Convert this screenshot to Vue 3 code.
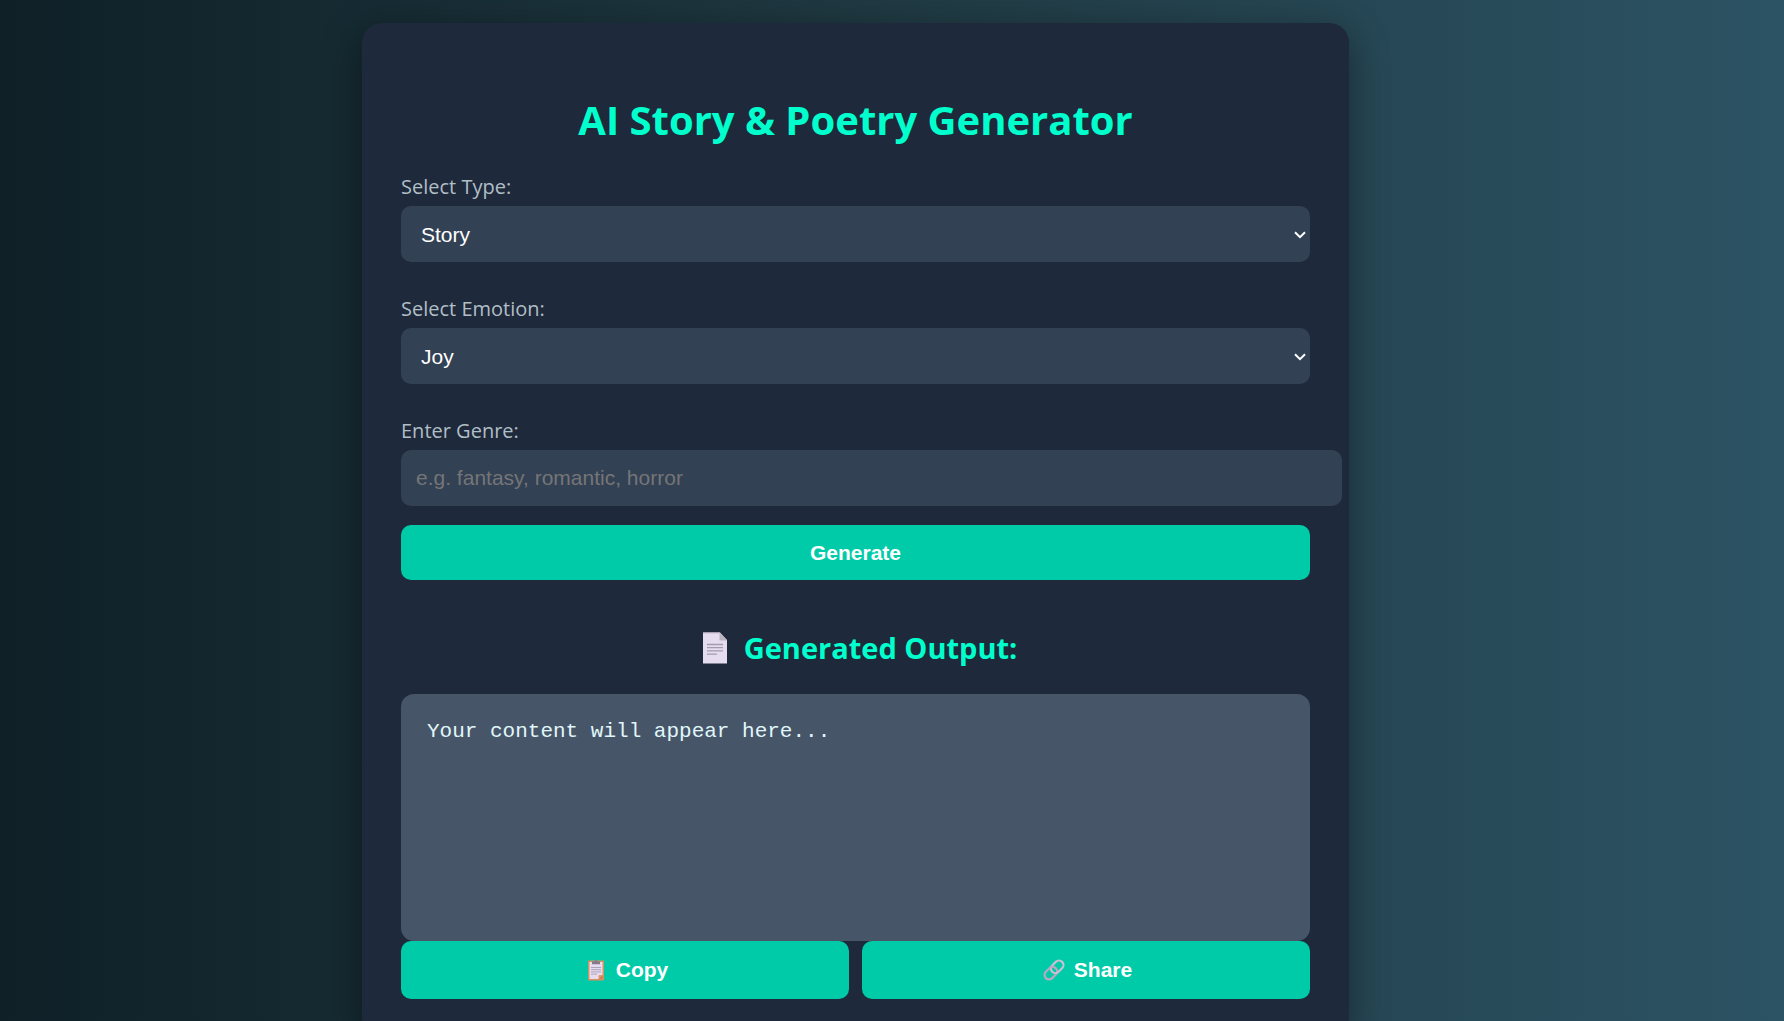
<script setup>
import { ref } from 'vue'

const type = ref('Story')
const emotion = ref('Joy')
const genre = ref('')
const output = ref('Your content will appear here...')

const types = ['Story', 'Poetry']
const emotions = ['Joy', 'Sadness', 'Anger', 'Fear', 'Love']
</script>

<template>
  <div class="page">
    <main class="card">
      <h1>AI Story &amp; Poetry Generator</h1>

      <div class="field">
        <label for="type">Select Type:</label>
        <div class="select-wrap">
          <select id="type" v-model="type">
            <option v-for="t in types" :key="t">{{ t }}</option>
          </select>
          <svg class="chevron" viewBox="0 0 12 8" aria-hidden="true"><path d="M1 1.2 6 6.2 11 1.2" /></svg>
        </div>
      </div>

      <div class="field">
        <label for="emotion">Select Emotion:</label>
        <div class="select-wrap">
          <select id="emotion" v-model="emotion">
            <option v-for="e in emotions" :key="e">{{ e }}</option>
          </select>
          <svg class="chevron" viewBox="0 0 12 8" aria-hidden="true"><path d="M1 1.2 6 6.2 11 1.2" /></svg>
        </div>
      </div>

      <div class="field">
        <label for="genre">Enter Genre:</label>
        <input id="genre" v-model="genre" type="text" placeholder="e.g. fantasy, romantic, horror" />
      </div>

      <button class="generate" type="button">Generate</button>

      <h2>
        <svg class="page-icon" viewBox="0 0 42 32" aria-hidden="true">
          <path d="M9 0.5h17l7 7.500V31.500H9z" fill="#e6dcf0" />
          <path d="M9 0.500h17v1H9z" fill="#c9bfd0" />
          <path d="M25.500 0.500 33 8.500h-7.500z" fill="#b9b2bf" />
          <path d="M13 12.500h16M13 15.700h16M13 18.900h16M13 22.100h10" stroke="#a59bad" stroke-width="1.300" />
        </svg>
        <span>Generated Output:</span>
      </h2>

      <pre class="output">{{ output }}</pre>

      <div class="actions">
        <button type="button">
          <svg class="button-icon" viewBox="0 0 28 22" aria-hidden="true">
            <rect x="6" y="1.500" width="16" height="20" rx="0.800" fill="#d9925f" />
            <path d="M7.500 3h13v13l-4 4h-9z" fill="#e6dcf0" />
            <path d="M20.500 16v4h-4z" fill="#d07f55" />
            <path d="M16.500 20v-3.200l0.800-0.800h3.200z" fill="#e5955f" />
            <path d="M10 5.300V2.500h2.400a1.700 1.700 0 0 1 3.200 0H18v2.800z" fill="#83788c" />
            <path d="M9 8.500h10M9 10.700h10M9 12.900h10M9 15.100h6" stroke="#a79bb3" stroke-width="0.900" />
          </svg>
          <span>Copy</span>
        </button>
        <button type="button">
          <svg class="button-icon" viewBox="0 0 28 22" aria-hidden="true">
            <g fill="none" transform="rotate(-45 14 11)" stroke-width="2.200">
              <rect x="2.500" y="6.500" width="14" height="9" rx="4.500" stroke="#b7a9c2" />
              <rect x="11.500" y="6.500" width="14" height="9" rx="4.500" stroke="#cabfd3" />
              <path d="M12 6.500a4.500 4.500 0 0 1 4.500 4.500" stroke="#b7a9c2" />
            </g>
          </svg>
          <span>Share</span>
        </button>
      </div>
    </main>
  </div>
</template>

<style>
body {
  margin: 0;
  background: #203a43;
}
</style>

<style scoped>
.page {
  box-sizing: border-box;
  min-height: 100vh;
  padding: 23px 96px 23px 23px;
  background: linear-gradient(to right, #0f2027, #203a43, #2c5364);
  font-family: "Open Sans", "Noto Sans", sans-serif;
}

.card {
  box-sizing: border-box;
  max-width: 987px;
  margin: 0 auto;
  padding: 39px;
  border-radius: 20px;
  background: #1e293b;
  box-shadow: 0 10px 39px rgba(0, 0, 0, 0.4);
}

h1 {
  margin: 30px 0 25px;
  color: #00ffcc;
  font-size: 40px;
  line-height: 56px;
  font-weight: 700;
  text-align: center;
}

.field {
  margin-bottom: 33px;
}

label {
  display: block;
  margin-bottom: 5px;
  color: #b0bec5;
  font-size: 20px;
  line-height: 28px;
}

select,
input,
button {
  display: block;
  box-sizing: border-box;
  border: none;
  border-radius: 10px;
  font-family: "Liberation Sans", Arial, sans-serif;
  font-size: 21px;
}

select,
input {
  height: 56px;
  background: #334155;
  color: #fff;
}

.select-wrap {
  position: relative;
}

select {
  width: 100%;
  padding: 0 40px 0 20px;
  appearance: none;
}

.chevron {
  position: absolute;
  top: 25px;
  right: 4px;
  width: 12px;
  height: 8px;
  pointer-events: none;
  fill: none;
  stroke: #fff;
  stroke-width: 2;
}

input {
  width: calc(100% + 32px);
  padding: 0 15px;
}

input::placeholder {
  color: #757575;
}

button {
  background: #00cba9;
  color: #fff;
  font-weight: 700;
  cursor: pointer;
}

.generate {
  width: 100%;
  height: 55px;
  margin-top: -14px;
}

h2 {
  display: flex;
  justify-content: center;
  align-items: center;
  gap: 8px;
  margin: 47px 0 25px;
  color: #00ffcc;
  font-size: 29px;
  line-height: 42px;
  font-weight: 700;
}

.page-icon {
  width: 42px;
  height: 32px;
}

.output {
  min-height: 195px;
  margin: 0;
  padding: 26px;
  border-radius: 13px;
  background: #475569;
  color: #e0f7fa;
  font-family: "Liberation Mono", "Courier New", monospace;
  font-size: 21px;
  line-height: 24px;
  white-space: pre-wrap;
}

.actions {
  display: flex;
  gap: 13px;
}

.actions button {
  display: flex;
  flex: 1;
  justify-content: center;
  align-items: center;
  gap: 6px;
  height: 58px;
}

.button-icon {
  width: 28px;
  height: 22px;
}
</style>
